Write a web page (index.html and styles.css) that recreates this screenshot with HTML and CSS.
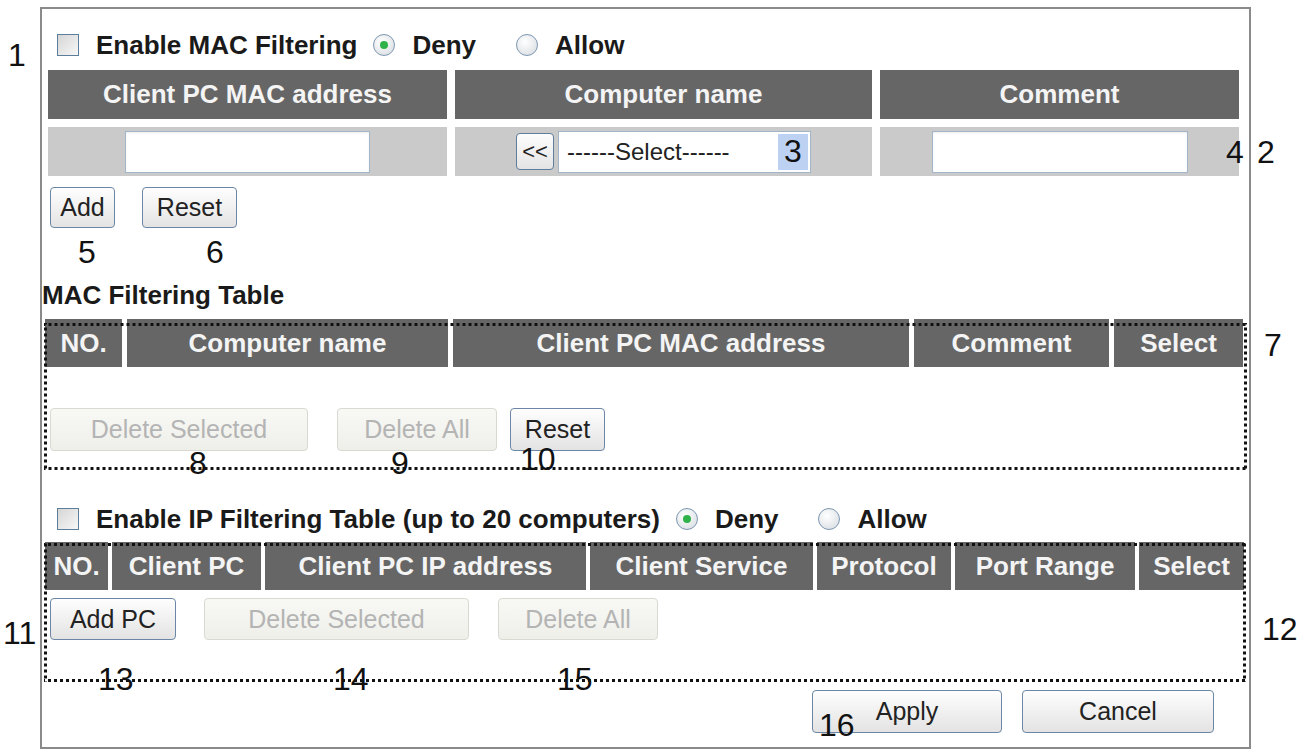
FILE: index.html
```html
<!DOCTYPE html>
<html lang="en">
<head>
    <meta charset="UTF-8">
    <title>MAC / IP Filtering</title>
    <link rel="stylesheet" href="styles.css">
</head>
<body>
    <div class="page">
        <div class="frame">
            <div class="check-line">
                <span class="checkbox"></span>
                <span class="label">Enable MAC Filtering</span>
                <span class="radio checked"></span>
                <span class="label">Deny</span>
                <span class="radio second"></span>
                <span class="label">Allow</span>
            </div>

            <div class="mac-grid">
                <div class="head">Client PC MAC address</div>
                <div class="head">Computer name</div>
                <div class="head">Comment</div>
                <div class="cell"><span class="text-box"></span></div>
                <div class="cell">
                    <div class="pick">
                        <span class="pick-btn">&lt;&lt;</span>
                        <span class="select-box">------Select------<span class="mark">3</span></span>
                    </div>
                </div>
                <div class="cell"><span class="text-box wide"></span></div>
            </div>

            <div class="btn-row">
                <button class="btn add">Add</button>
                <button class="btn reset">Reset</button>
            </div>

            <div class="table-title">MAC Filtering Table</div>

            <div class="list mac">
                <div class="list-head mac-cols">
                    <div class="head">NO.</div>
                    <div class="head">Computer name</div>
                    <div class="head">Client PC MAC address</div>
                    <div class="head">Comment</div>
                    <div class="head">Select</div>
                </div>
                <div class="list-actions">
                    <button class="btn off del-sel" disabled>Delete Selected</button>
                    <button class="btn off del-all" disabled>Delete All</button>
                    <button class="btn reset">Reset</button>
                </div>
            </div>

            <div class="check-line ip">
                <span class="checkbox"></span>
                <span class="label">Enable IP Filtering Table (up to 20 computers)</span>
                <span class="radio checked"></span>
                <span class="label">Deny</span>
                <span class="radio second"></span>
                <span class="label">Allow</span>
            </div>

            <div class="list ip">
                <div class="list-head ip-cols">
                    <div class="head">NO.</div>
                    <div class="head">Client PC</div>
                    <div class="head">Client PC IP address</div>
                    <div class="head">Client Service</div>
                    <div class="head">Protocol</div>
                    <div class="head">Port Range</div>
                    <div class="head">Select</div>
                </div>
                <div class="list-actions ip-actions">
                    <button class="btn add-pc">Add PC</button>
                    <button class="btn off del-sel-ip" disabled>Delete Selected</button>
                    <button class="btn off del-all" disabled>Delete All</button>
                </div>
            </div>

            <div class="final-row">
                <button class="btn apply">Apply</button>
                <button class="btn cancel">Cancel</button>
            </div>
        </div>

        <!-- callout numbers -->
        <span class="note n1">1</span>
        <span class="note n4">4</span>
        <span class="note n2">2</span>
        <span class="note n5">5</span>
        <span class="note n6">6</span>
        <span class="note n7">7</span>
        <span class="note n8">8</span>
        <span class="note n9">9</span>
        <span class="note n10">10</span>
        <span class="note n11">11</span>
        <span class="note n12">12</span>
        <span class="note n13">13</span>
        <span class="note n14">14</span>
        <span class="note n15">15</span>
        <span class="note n16">16</span>
    </div>
</body>
</html>
```

FILE: styles.css
```css
body {
    margin: 0;
    background-color: #fff;
    color: #111;
    font-family: "Liberation Sans", Arial, sans-serif;
}

.page {
    position: relative;
    width: 1309px;
    height: 756px;
    padding: 7px 0 0 40px;
    box-sizing: border-box;
}

.frame {
    width: 1211px;
    box-sizing: border-box;
    border: 2px solid #8a8a8a;
    display: flex;
    flex-direction: column;
    align-items: flex-start;
    padding-bottom: 14px;
}

/* checkbox / radio lines */
.check-line {
    display: flex;
    align-items: center;
    height: 30px;
    margin: 21px 0 0 15px;
    font-size: 26px;
    font-weight: bold;
    color: #1a1a1a;
}

.check-line.ip {
    margin-top: 34px;
}

.checkbox {
    width: 22px;
    height: 22px;
    box-sizing: border-box;
    border: 1px solid #5d7d9d;
    background: linear-gradient(135deg, #d6d6d6, #f7f7f7);
}

.radio {
    width: 22px;
    height: 22px;
    box-sizing: border-box;
    border: 1px solid #7d97b2;
    border-radius: 50%;
    background: radial-gradient(circle at 40% 35%, #ffffff, #d5dadf);
    margin-left: 16px;
    display: grid;
    place-items: center;
}

.radio.checked::after {
    content: "";
    width: 8px;
    height: 8px;
    border-radius: 50%;
    background-color: #2fb24a;
}

.radio.second {
    margin-left: 40px;
}

.label {
    margin-left: 17px;
}

/* top entry grid */
.mac-grid {
    display: grid;
    grid-template-columns: 399px 417px 359px;
    grid-template-rows: 49px 49px;
    gap: 8px;
    margin: 10px 0 0 6px;
}

.head {
    background-color: #666;
    color: #f4f4f4;
    font-size: 26px;
    font-weight: bold;
    display: flex;
    align-items: center;
    justify-content: center;
    white-space: nowrap;
}

.cell {
    background-color: #cacaca;
    display: flex;
    align-items: center;
    justify-content: center;
}

.text-box {
    width: 245px;
    height: 42px;
    box-sizing: border-box;
    border: 1px solid #a3b5c8;
    background-color: #fff;
    box-shadow: inset 0 1px 2px rgba(0, 0, 0, 0.08);
}

.text-box.wide {
    width: 256px;
}

.pick {
    display: flex;
    align-items: center;
    gap: 4px;
}

.pick-btn {
    width: 38px;
    height: 37px;
    box-sizing: border-box;
    border: 1px solid #5f7d9c;
    border-radius: 4px;
    background: linear-gradient(#fdfdfd, #e4e4e4);
    font-size: 22px;
    display: flex;
    align-items: center;
    justify-content: center;
    color: #222;
}

.select-box {
    width: 253px;
    height: 42px;
    box-sizing: border-box;
    border: 1px solid #a3b5c8;
    background-color: #fff;
    display: flex;
    align-items: center;
    padding: 0 2px 0 8px;
    font-size: 24px;
    color: #222;
}

.mark {
    margin-left: auto;
    width: 30px;
    height: 36px;
    background-color: #bdd2f2;
    font-size: 32px;
    display: flex;
    align-items: center;
    justify-content: center;
    color: #111;
}

/* buttons */
.btn {
    font-family: "Liberation Sans", Arial, sans-serif;
    font-size: 25px;
    color: #222;
    height: 41px;
    padding: 0;
    box-sizing: border-box;
    border: 1px solid #6b87a5;
    border-radius: 4px;
    background: linear-gradient(#fefefe, #e3e3e3);
}

.btn.off {
    color: #b4b4b4;
    border-color: #d9d9d2;
    background: linear-gradient(#f8f8f5, #efefea);
}

.btn-row {
    display: flex;
    gap: 27px;
    margin: 11px 0 0 8px;
}

.add { width: 65px; }
.reset { width: 95px; }

.table-title {
    margin-top: 52px;
    font-size: 26px;
    line-height: 30px;
    font-weight: bold;
    color: #1a1a1a;
}

/* filtering tables */
.list {
    position: relative;
    width: 1198px;
    margin: 9px 0 0 3px;
    padding-bottom: 19px;
}

/* square-dotted outline drawn over the table */
.list::after {
    content: "";
    position: absolute;
    top: 4px;
    left: -1px;
    right: -4px;
    bottom: 0;
    background:
        linear-gradient(to right, #111 50%, transparent 0) top / 6px 3px repeat-x,
        linear-gradient(to right, #111 50%, transparent 0) bottom / 6px 3px repeat-x,
        linear-gradient(#111 50%, transparent 0) left / 3px 6px repeat-y,
        linear-gradient(#111 50%, transparent 0) right / 3px 6px repeat-y;
}

.list.ip {
    margin-top: 8px;
    padding-bottom: 42px;
}

.list.ip::after {
    top: 1px;
    right: -3px;
}

.list-head {
    display: grid;
    height: 48px;
    column-gap: 5px;
}

.mac-cols {
    grid-template-columns: 77px 321px 456px 195px 129px;
}

.ip-cols {
    grid-template-columns: 63px 149px 321px 223px 134px 180px 105px;
    column-gap: 4px;
}

.list-actions {
    display: flex;
    margin: 41px 0 0 5px;
}

.list-actions .btn {
    height: 43px;
}

.del-sel { width: 258px; }
.del-all { width: 160px; margin-left: 29px; }
.list-actions .reset { margin-left: 13px; }

.ip-actions {
    margin-top: 8px;
}

.ip-actions .btn {
    height: 42px;
}

.add-pc { width: 126px; }
.del-sel-ip { width: 265px; margin-left: 28px; }

.final-row {
    display: flex;
    gap: 20px;
    align-self: flex-end;
    margin: 8px 35px 0 0;
}

.final-row .btn {
    height: 43px;
}

.apply { width: 190px; }
.cancel { width: 192px; }

/* callout numbers */
.note {
    position: absolute;
    font-size: 32px;
    line-height: 32px;
    color: #111;
}

.n1 { left: 8px; top: 39px; }
.n4 { left: 1226px; top: 136px; }
.n2 { left: 1257px; top: 136px; }
.n5 { left: 78px; top: 236px; }
.n6 { left: 206px; top: 236px; }
.n7 { left: 1264px; top: 329px; }
.n8 { left: 189px; top: 447px; }
.n9 { left: 391px; top: 447px; }
.n10 { left: 520px; top: 443px; }
.n11 { left: 3px; top: 617px; }
.n12 { left: 1262px; top: 613px; }
.n13 { left: 98px; top: 663px; }
.n14 { left: 333px; top: 663px; }
.n15 { left: 557px; top: 663px; }
.n16 { left: 819px; top: 709px; }
```
